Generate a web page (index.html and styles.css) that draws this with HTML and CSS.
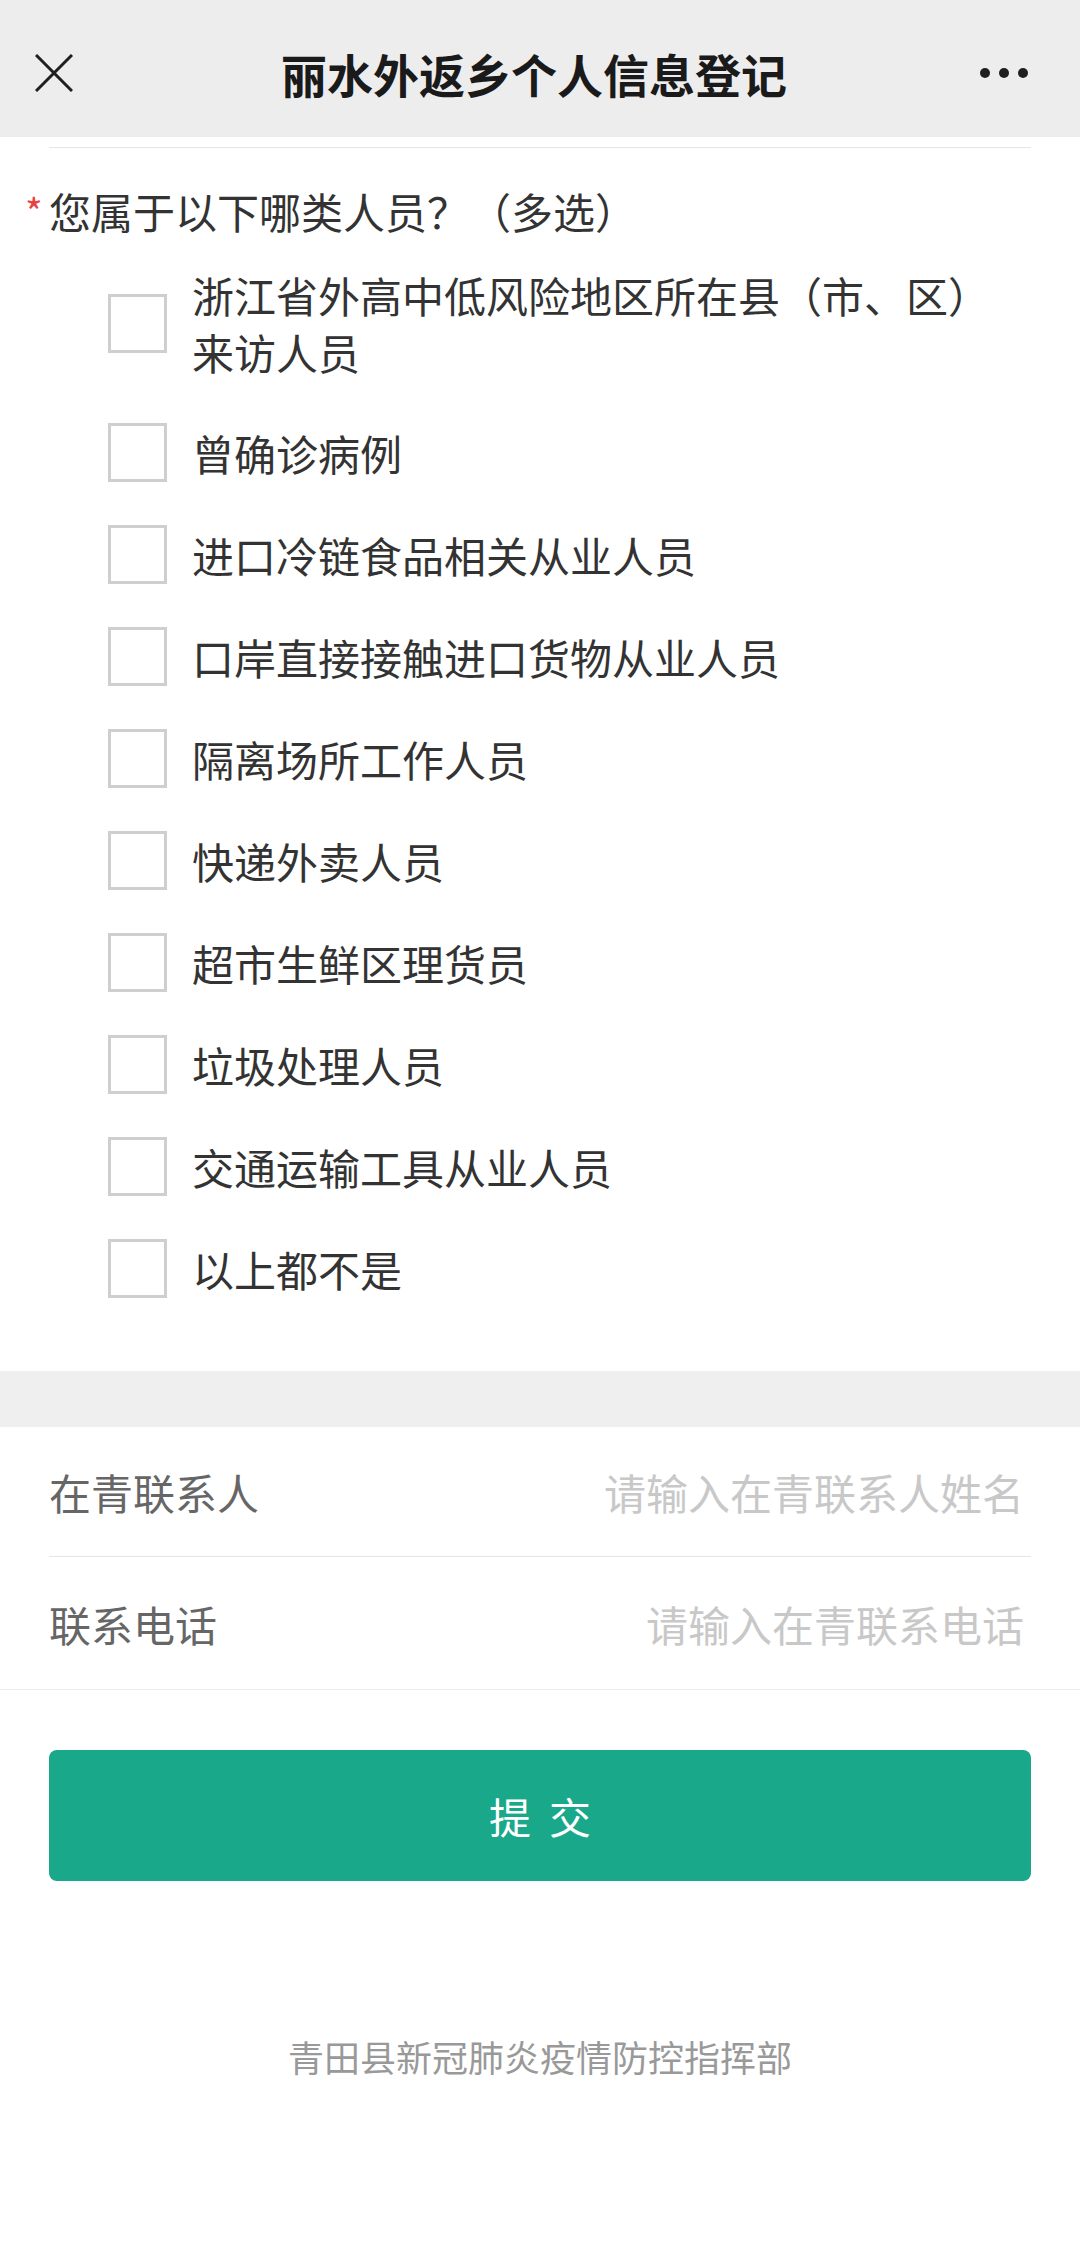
FILE: index.html
```html
<!DOCTYPE html>
<html lang="zh-CN">
<head>
    <meta charset="UTF-8">
    <meta name="viewport" content="width=device-width, initial-scale=1.0">
    <title>丽水外返乡个人信息登记</title>
    <link rel="stylesheet" href="styles.css">
</head>
<body>
    <header class="topbar">
        <div class="topbar-close">
            <svg width="38" height="38" viewBox="0 0 38 38">
                <path d="M1 1 L37 37 M37 1 L1 37" stroke="#1f1f1f" stroke-width="3" fill="none"/>
            </svg>
        </div>
        <h1 class="topbar-title">丽水外返乡个人信息登记</h1>
        <div class="topbar-more">
            <span class="dot"></span><span class="dot"></span><span class="dot"></span>
        </div>
    </header>

    <div class="section">
        <div class="top-line"></div>

        <div class="question">
            <span class="required">*</span>
            <span class="question-text">您属于以下哪类人员？（多选）</span>
        </div>

        <div class="options" id="options">
            <!-- 选项 -->
        </div>
    </div>

    <div class="gap-band"></div>

    <div class="fields">
        <label class="field">
            <span class="field-label">在青联系人</span>
            <input class="field-input" type="text" placeholder="请输入在青联系人姓名">
        </label>
        <div class="field-line"></div>
        <label class="field field-last">
            <span class="field-label">联系电话</span>
            <input class="field-input" type="tel" placeholder="请输入在青联系电话">
        </label>
    </div>

    <div class="actions">
        <button class="submit-btn" id="submit-btn">提交</button>
    </div>

    <footer class="footer">青田县新冠肺炎疫情防控指挥部</footer>

    <script>
        // 人员类别
        const options = [
            "浙江省外高中低风险地区所在县（市、区）来访人员",
            "曾确诊病例",
            "进口冷链食品相关从业人员",
            "口岸直接接触进口货物从业人员",
            "隔离场所工作人员",
            "快递外卖人员",
            "超市生鲜区理货员",
            "垃圾处理人员",
            "交通运输工具从业人员",
            "以上都不是"
        ];

        const list = document.getElementById('options');

        options.forEach((text, i) => {
            const row = document.createElement('label');
            row.className = 'option';
            row.innerHTML = `
                <input type="checkbox" class="option-input" value="${i}">
                <span class="option-box"></span>
                <span class="option-text">${text}</span>
            `;
            list.appendChild(row);
        });
    </script>
</body>
</html>
```

FILE: styles.css
```css
:root {
    --verde: #19a88a;
    --texto: #333333;
    --cinza-linha: #e6e6e6;
}

* {
    margin: 0;
    padding: 0;
    box-sizing: border-box;
    font-family: "Noto Sans CJK SC", "Noto Sans", sans-serif;
}

body {
    background-color: #ffffff;
    color: var(--texto);
    width: 1080px;
}

.topbar {
    height: 137px;
    background-color: #ededed;
    display: grid;
    grid-template-columns: 108px 1fr 120px;
    align-items: center;
    padding-top: 8px;
}

.topbar-close {
    padding-left: 35px;
    display: flex;
}

.topbar-title {
    text-align: center;
    font-size: 46px;
    font-weight: 700;
    color: #1a1a1a;
    line-height: 60px;
}

.topbar-more {
    display: flex;
    gap: 9px;
    padding-left: 20px;
}

.dot {
    width: 10px;
    height: 10px;
    border-radius: 50%;
    background-color: #1f1f1f;
}

.section {
    padding-top: 10px;
}

.top-line {
    height: 1px;
    margin: 0 49px;
    background-color: var(--cinza-linha);
}

.question {
    display: flex;
    align-items: flex-start;
    padding: 34px 0 0 25px;
}

.required {
    width: 24px;
    color: #e64340;
    font-size: 38px;
    line-height: 38px;
    margin-top: 10px;
}

.question-text {
    font-size: 42px;
    line-height: 57px;
}

.options {
    padding: 6px 49px 51px 108px;
}

.option {
    display: flex;
    align-items: center;
    padding: 21px 0 22px;
    cursor: pointer;
}

.option-input {
    display: none;
}

.option-box {
    flex: none;
    width: 59px;
    height: 59px;
    border: 3px solid #cfcfcf;
    background-color: #ffffff;
}

.option-input:checked + .option-box {
    background-color: var(--verde);
    border-color: var(--verde);
}

.option-text {
    margin-left: 25px;
    font-size: 42px;
    line-height: 57px;
}

.gap-band {
    height: 56px;
    background-color: #efefef;
}

.fields {
    border-bottom: 1px solid #ececec;
}

.field {
    display: flex;
    align-items: center;
    height: 129px;
    padding: 0 56px 0 49px;
}

.field-last {
    height: 132px;
}

.field-label {
    font-size: 42px;
    color: #666666;
    white-space: nowrap;
}

.field-input {
    flex: 1;
    min-width: 0;
    border: none;
    outline: none;
    background: transparent;
    text-align: right;
    font-size: 42px;
    color: var(--texto);
}

.field-input::placeholder {
    color: #c8c8c8;
}

.field-line {
    height: 1px;
    margin: 0 49px;
    background-color: var(--cinza-linha);
}

.actions {
    padding: 60px 49px 0;
}

.submit-btn {
    width: 100%;
    height: 131px;
    border: none;
    border-radius: 8px;
    background-color: var(--verde);
    color: #ffffff;
    font-size: 42px;
    letter-spacing: 18px;
    text-indent: 18px;
    cursor: pointer;
}

.footer {
    margin-top: 150px;
    text-align: center;
    font-size: 36px;
    line-height: 50px;
    color: #999999;
}
```
